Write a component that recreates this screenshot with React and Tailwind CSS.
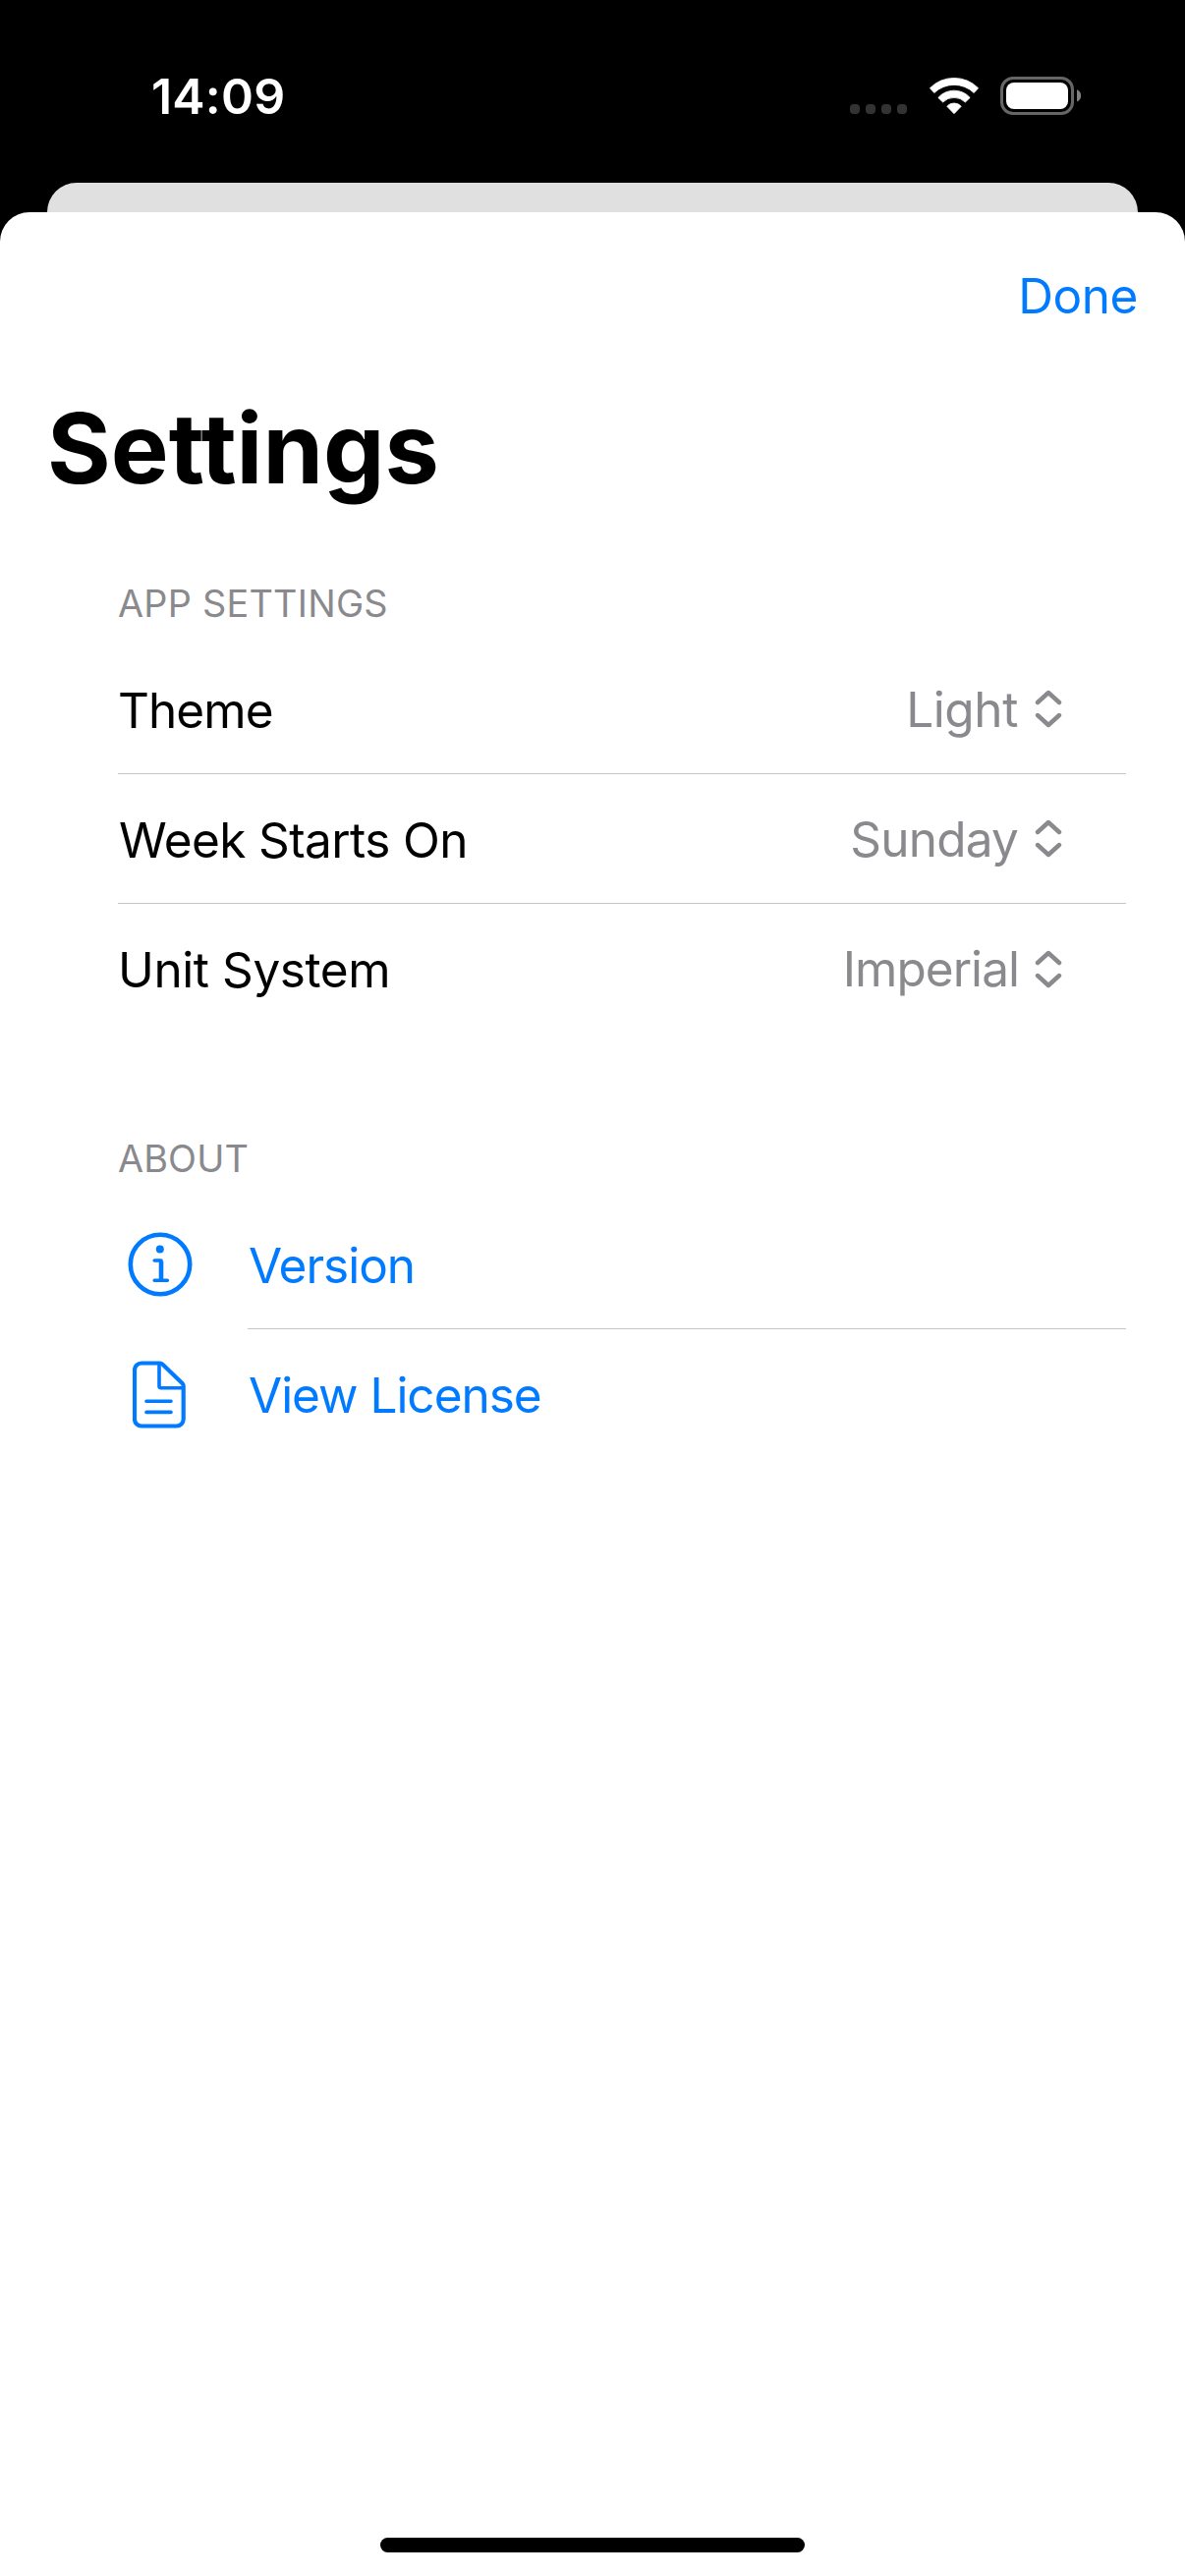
function SignalDots() {
  return (
    <div className="flex gap-1.5">
      {[0, 1, 2, 3].map((i) => (
        <span key={i} className="size-2.5 rounded-[4px] bg-[#333333]" />
      ))}
    </div>
  );
}

function WifiIcon() {
  return (
    <svg className="h-[38px] w-[52px]" viewBox="0 0 52 38" fill="#fff" stroke="#fff" strokeWidth="0.8" strokeLinejoin="round">
      <path d="M1.400 10.700A34.500 34.500 0 0 1 50.600 10.700L46.200 15.500A29.200 29.200 0 0 0 5.800 15.500Z" />
      <path d="M9.800 20.400A21.700 21.700 0 0 1 42.200 20.400L37.400 25A16.200 16.200 0 0 0 14.600 25Z" />
      <path d="M18.800 29.300A9.500 9.500 0 0 1 33.200 29.300L26 36.700Z" />
    </svg>
  );
}

function BatteryIcon() {
  return (
    <svg className="h-[39px] w-[82px]" viewBox="0 0 82 39">
      <rect x="1.500" y="1.500" width="72" height="36" rx="11.500" fill="none" stroke="#666" strokeWidth="3" />
      <rect x="6" y="6" width="63" height="27" rx="8" fill="#fff" />
      <path d="M78 13.200v12.400c2.500-1 4.200-3.400 4.200-6.200s-1.700-5.200-4.200-6.200z" fill="#808080" />
    </svg>
  );
}

function UpDownIcon() {
  return (
    <svg className="ml-[17px] h-[39px] w-7" viewBox="0 0 28 39" fill="none" stroke="#8a8a8e" strokeWidth="4.400" strokeLinecap="round" strokeLinejoin="round">
      <path d="M3 13 14 3l11 10M3 26l11 10 11-10" />
    </svg>
  );
}

function InfoIcon() {
  return (
    <svg className="ml-0.5 h-[66px] w-[66px]" viewBox="0 0 66 66" fill="none" stroke="#007aff" strokeWidth="4.600" strokeLinecap="round" strokeLinejoin="round">
      <circle cx="33" cy="33" r="30.200" />
      <circle cx="32.800" cy="17.400" r="4" fill="#007aff" stroke="none" />
      <path d="M27.200 29h6.800M27.200 49.200h13.200" strokeWidth="3.600" />
      <path d="M34 29.500v19" strokeLinecap="butt" />
    </svg>
  );
}

function DocumentIcon() {
  return (
    <svg className="ml-px h-[69px] w-[54px]" viewBox="0 0 54 69" fill="none" stroke="#007aff" strokeWidth="4.200" strokeLinecap="round" strokeLinejoin="round">
      <path d="M9 2.500h18.500a4 4 0 0 1 3 1.200L50.500 23a4 4 0 0 1 1.200 3v33.500a7 7 0 0 1-7 7H9a7 7 0 0 1-7-7v-50a7 7 0 0 1 7-7z" />
      <path d="M27 3v22.800a2 2 0 0 0 2 2h22M14 41.200h25M14 52.400h25" strokeWidth="3.600" />
    </svg>
  );
}

const settings = [
  { label: "Theme", value: "Light", labelClass: "tracking-[-0.95px]", valueClass: "tracking-[-0.4px]" },
  { label: "Week Starts On", value: "Sunday", labelClass: "pl-px tracking-[-0.6px]", valueClass: "tracking-[-0.8px]" },
  { label: "Unit System", value: "Imperial", labelClass: "tracking-[-0.42px]", valueClass: "-mr-px tracking-[-0.96px]" },
];

const links = [
  { label: "Version", Icon: InfoIcon },
  { label: "View License", Icon: DocumentIcon },
];

function Separator({ className = "" }) {
  return <div className={`h-px shrink-0 bg-[#c6c6c8] ${className}`} />;
}

export default function App() {
  return (
    <div className="flex h-[2622px] w-[1206px] flex-col overflow-hidden bg-black font-['Inter',sans-serif] text-black">
      <header className="flex h-[186px] items-start justify-between pr-[106px] pl-[154px] text-white">
        <span className="mt-[68px] text-[50px] leading-[60px] font-semibold tracking-[0.2px]">14:09</span>
        <div className="mt-[78px] flex items-start">
          <div className="mt-7"><SignalDots /></div>
          <div className="mt-px ml-[22px]"><WifiIcon /></div>
          <div className="ml-[21px]"><BatteryIcon /></div>
        </div>
      </header>

      <div className="mx-12 h-[30px] shrink-0 rounded-t-[30px] bg-[#e0e0e0]" />

      <main className="flex flex-1 flex-col rounded-t-[30px] bg-white">
        <nav className="flex h-[170px] shrink-0 items-center justify-end pr-12">
          <button className="text-[49.5px] leading-[60px] tracking-[-0.45px] text-[#007aff]">Done</button>
        </nav>
        <h1 className="flex h-[140px] shrink-0 items-center pl-12 text-[98.9px] leading-[120px] font-bold">Settings</h1>

        <section className="pr-[60px] pl-[120px]">
          <h2 className="pt-[65px] pb-[19px] text-[37.8px] leading-[46px] tracking-[0.25px] text-[#8a8a8e]">APP SETTINGS</h2>
          {settings.map(({ label, value, labelClass, valueClass }, i) => (
            <div key={label} className="flex h-[132px] flex-col">
              <div className="flex flex-1 items-center pr-[65px] text-[49.5px] leading-[60px]">
                <span className={`pt-0.5 ${labelClass}`}>{label}</span>
                <span className={`ml-auto text-[#8a8a8e] ${valueClass}`}>{value}</span>
                <UpDownIcon />
              </div>
              {i < settings.length - 1 && <Separator />}
            </div>
          ))}
        </section>

        <section className="pr-[60px] pl-[120px]">
          <h2 className="pt-[104px] pb-[19px] text-[37.8px] leading-[46px] tracking-[0.15px] text-[#8a8a8e]">ABOUT</h2>
          {links.map(({ label, Icon }, i) => (
            <div key={label} className="flex h-[132px] flex-col">
              <div className="flex flex-1 items-center text-[#007aff]">
                <span className="flex w-[83px] justify-center"><Icon /></span>
                <span className="pt-0.5 pl-[50px] text-[49.5px] leading-[60px] tracking-[-1.02px]">{label}</span>
              </div>
              {i < links.length - 1 && <Separator className="ml-[132px]" />}
            </div>
          ))}
        </section>

        <div className="mx-auto mt-auto mb-6 h-[15px] w-[432px] rounded-full bg-black" />
      </main>
    </div>
  );
}
